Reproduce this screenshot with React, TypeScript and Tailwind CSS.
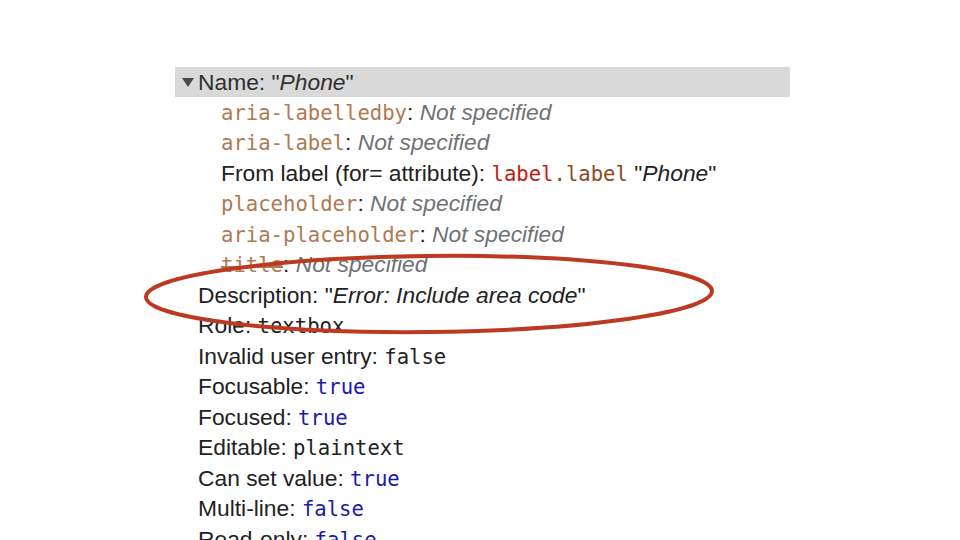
const sans = "font-['Liberation_Sans',Arial,sans-serif]"
const mono = "font-['DejaVu_Sans_Mono',monospace] text-[20.6px]"

function Attr({ name }: { name: string }) {
  return <span className={`${mono} text-[#b07a52]`}>{name}</span>
}

function NotSpec() {
  return <span className="italic text-[#6e7276]">Not specified</span>
}

function Row({ children, sub }: { children: React.ReactNode; sub?: boolean }) {
  return (
    <div className={`h-[30.5px] leading-[30.5px] whitespace-nowrap ${sub ? 'pl-[46px]' : 'pl-[23px]'}`}>
      {children}
    </div>
  )
}

export default function App() {
  return (
    <div className={`relative w-[960px] h-[540px] overflow-hidden bg-white ${sans} text-[22.8px] text-[#222222]`}>
      <div className="pt-[67px] pl-[175px]">
        <div className="w-[615px] h-[30px] bg-[#d9d9d9] flex items-center leading-[30px]">
          <span className="w-[23px] flex justify-center pl-[3px]">
            <svg width="12" height="9" viewBox="0 0 12 9">
              <path d="M0 0 L12 0 L6 9 Z" fill="#4a4a4a" />
            </svg>
          </span>
          <span className="text-[#303030]">
            Name: "<span className="italic">Phone</span>"
          </span>
        </div>
        <div className="-mt-[0.5px]">
          <Row sub>
            <Attr name="aria-labelledby" />: <NotSpec />
          </Row>
          <Row sub>
            <Attr name="aria-label" />: <NotSpec />
          </Row>
          <Row sub>
            From label (for= attribute):{' '}
            <span className={mono}>
              <span className="text-[#c41a16]">label</span>
              <span className="text-[#8a4b1f]">.label</span>
            </span>{' '}
            "<span className="italic">Phone</span>"
          </Row>
          <Row sub>
            <Attr name="placeholder" />: <NotSpec />
          </Row>
          <Row sub>
            <Attr name="aria-placeholder" />: <NotSpec />
          </Row>
          <Row sub>
            <span className="line-through decoration-[#b07a52]">
              <Attr name="title" />
            </span>
            : <NotSpec />
          </Row>
          <Row>
            Description: "<span className="italic">Error: Include area code</span>"
          </Row>
          <Row>
            Role: <span className={mono}>textbox</span>
          </Row>
          <Row>
            Invalid user entry: <span className={mono}>false</span>
          </Row>
          <Row>
            Focusable: <span className={`${mono} text-[#1a1aa6]`}>true</span>
          </Row>
          <Row>
            Focused: <span className={`${mono} text-[#1a1aa6]`}>true</span>
          </Row>
          <Row>
            Editable: <span className={mono}>plaintext</span>
          </Row>
          <Row>
            Can set value: <span className={`${mono} text-[#1a1aa6]`}>true</span>
          </Row>
          <Row>
            Multi-line: <span className={`${mono} text-[#1a1aa6]`}>false</span>
          </Row>
          <Row>
            Read-only: <span className={`${mono} text-[#1a1aa6]`}>false</span>
          </Row>
        </div>
      </div>
      <svg className="absolute left-0 top-0 pointer-events-none" width="960" height="540">
        <ellipse cx="429" cy="294" rx="283" ry="38" fill="none" stroke="#bd3a22" strokeWidth="4" transform="rotate(-0.6 429 294)" />
      </svg>
    </div>
  )
}
